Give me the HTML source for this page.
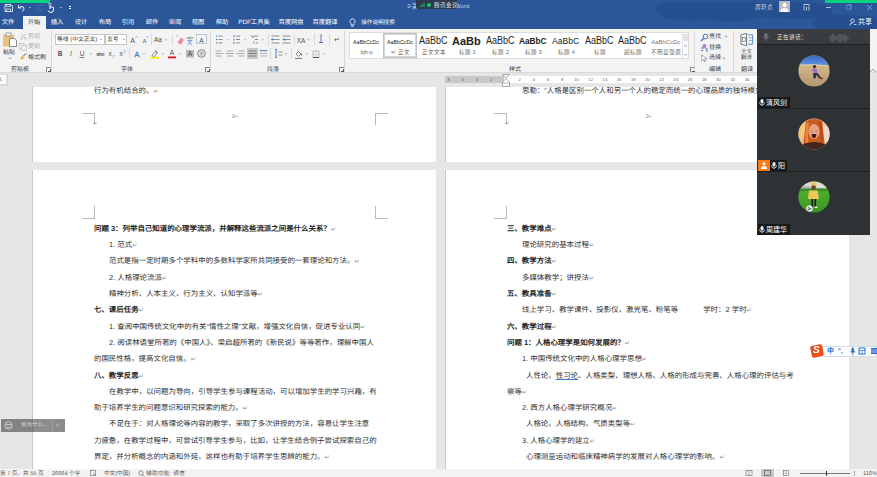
<!DOCTYPE html>
<html lang="zh-CN"><head><meta charset="utf-8">
<style>
*{margin:0;padding:0;box-sizing:border-box}
html,body{width:877px;height:477px;overflow:hidden;background:#e6e6e6;font-family:"Liberation Sans",sans-serif;position:relative}
.a{position:absolute}
#title{left:0;top:0;width:877px;height:29px;background:#2b579a;overflow:hidden}
#ribbon{left:0;top:29px;width:877px;height:44px;background:#f3f3f3;border-bottom:1px solid #dadada}
#status{left:0;top:469px;width:877px;height:8px;background:#f3f3f3}
.page{background:#fff;border-left:1px solid #c9c9c9}
.t{position:absolute;white-space:nowrap;font-size:7.45px;line-height:10px;color:#2e2e2e;text-rendering:geometricPrecision}
.b{font-weight:bold;color:#262626}
.pm{color:#8a8a8a;font-weight:normal;font-size:6px}
.rn{position:absolute;top:76px;width:10px;margin-left:-5px;text-align:center;font-size:4.2px;line-height:7px;color:#666}
.w{position:absolute;white-space:nowrap;color:#fff;font-size:7px;line-height:8px}
.tab{position:absolute;top:19px;white-space:nowrap;color:#fff;font-size:6.3px;line-height:8px;transform:translateX(-50%);text-rendering:geometricPrecision}
#panel{left:757px;top:29px;width:113px;height:206px;background:#2f3235}
.r{position:absolute;white-space:nowrap;font-size:6px;line-height:8px;color:#444;text-rendering:geometricPrecision}
.ic{font-size:7.5px;color:#555}
.sep{position:absolute;top:2px;width:1px;height:40px;background:#d6d6d6}
.vs{position:absolute;width:1px;background:#dadada}
.box{background:#fff;border:1px solid #c6c6c6}
.dd{position:absolute;width:0;height:0;border-left:1.5px solid transparent;border-right:1.5px solid transparent;border-top:1.5px solid #666}
.ch{position:absolute;width:3px;height:3px;border-right:.7px solid #888;border-bottom:.7px solid #888;transform:rotate(45deg)}
.ln{position:absolute;width:5px;height:5px;border-left:1px solid #888;border-top:1px solid #888;margin-top:1px}
.ln::after{content:"";position:absolute;left:1px;top:1px;width:2px;height:2px;border-right:1px solid #555;border-bottom:1px solid #555}
.st2{position:absolute;white-space:nowrap;color:#222;line-height:10px}
.sl2{position:absolute;white-space:nowrap;left:0;width:33px;text-align:center;top:16px;font-size:5.5px;line-height:7px;color:#666}
.st{position:absolute;white-space:nowrap;transform:translateX(-50%);color:#222;line-height:12px}
.sl{position:absolute;white-space:nowrap;transform:translateX(-50%);top:20px;font-size:6px;line-height:7px;color:#555}
</style></head><body>
<div id="title" class="a">
  <svg class="a" style="left:640px;top:0" width="237" height="29" viewBox="0 0 237 29"><g fill="#234d8b" opacity=".7"><path d="M18 4Q30 0 60 2Q100 0 130 3Q170 0 190 6Q196 14 186 18Q150 20 120 17Q100 24 70 20Q40 22 25 18Q12 12 18 4z"/><path d="M175 20Q195 12 215 16Q237 14 237 22V29H180Q170 26 175 20z"/></g></svg>
  <div class="a" style="left:0;top:0;width:50px;height:3px;background:#04d27c"></div>
  <div class="a" style="left:825px;top:0;width:52px;height:3px;background:#04d27c"></div>
  <!-- qat icons -->
  <svg class="a" style="left:4px;top:4px" width="9" height="8" viewBox="0 0 9 8"><path d="M1 .5h6l1.5 1.5v5.5h-7.5z" fill="none" stroke="#fff" stroke-width=".8"/><path d="M2.5 .5v2h4v-2 M2.5 7.5v-2.5h4v2.5" fill="none" stroke="#fff" stroke-width=".7"/></svg>
  <svg class="a" style="left:17px;top:4px" width="9" height="8" viewBox="0 0 9 8"><path d="M1.5 1v3h3" fill="none" stroke="#fff" stroke-width=".8"/><path d="M1.8 3.8Q4 1.5 6.5 3 Q8 5 5.5 7.5" fill="none" stroke="#fff" stroke-width=".9"/></svg>
  <div class="a" style="left:29px;top:7px;width:2px;height:1px;background:#8fa6c8"></div>
  <svg class="a" style="left:36px;top:4px" width="8" height="8" viewBox="0 0 8 8"><path d="M6 1.8A3 3 0 1 0 6.8 4.5" fill="none" stroke="#56739f" stroke-width=".9"/></svg>
  <svg class="a" style="left:47px;top:3px" width="8" height="10" viewBox="0 0 8 10"><path d="M3 1.5v4.5 M3 4h2.5a1 1 0 0 1 1 1v2Q6.5 9.5 4 9.5Q2 9.5 1.2 7.5" fill="none" stroke="#fff" stroke-width="1"/><path d="M1.5 1.5a1.5 1.5 0 0 1 3 0" fill="none" stroke="#fff" stroke-width=".6"/></svg>
  <div class="a" style="left:60px;top:7px;width:2px;height:1px;background:#8fa6c8"></div>
  <div class="a" style="left:69px;top:6px;width:2px;height:1px;background:#fff"></div>
  <div class="a" style="left:69px;top:8px;width:2px;height:1px;background:#fff"></div>
  <!-- title -->
  <div class="w" style="left:407px;top:2px;color:#c8d4e8;font-size:6px">3-第</div><div class="w" style="left:455px;top:2px;color:#c8d4e8;font-size:6px">Word</div>
  <div class="a" style="left:416px;top:0;width:41px;height:9px;background:#2e394c;border-radius:0 0 2px 2px"></div>
  <svg class="a" style="left:419px;top:2px" width="14" height="6" viewBox="0 0 14 6"><path d="M1 5v-1.5 M3 5v-3 M5 5v-4.5" stroke="#18c870" stroke-width="1"/><circle cx="10" cy="3" r="2" fill="#18c870"/></svg>
  <div class="w" style="left:434px;top:1px;font-size:5.5px;color:#e8e8e8">腾讯会议</div>
  <!-- right -->
  <div class="w" style="left:755px;top:3px;font-size:5.6px;color:#cfd8e6">周轩贞</div>
  <div class="a" style="left:779px;top:1px;width:11px;height:11px;background:#b9b9b9"></div>
  <svg class="a" style="left:779px;top:1px" width="11" height="11" viewBox="0 0 11 11"><circle cx="5.5" cy="4" r="2.2" fill="#fff"/><path d="M1.5 11 Q1.5 7 5.5 7 Q9.5 7 9.5 11z" fill="#fff"/></svg>
  <svg class="a" style="left:803px;top:4px" width="7" height="7" viewBox="0 0 7 7"><path d="M.5 .5h6 M1 1.5v5 M3.5 3v3.5 M6 1.5v5" fill="none" stroke="#dfe6f2" stroke-width=".8"/></svg>
  <div class="a" style="left:826px;top:7px;width:5px;height:1px;background:#aebfd8"></div>
  <svg class="a" style="left:845px;top:3px" width="8" height="8" viewBox="0 0 8 8"><path d="M1.5 2.5h4v4h-4z M2.5 2.5v-1h4v4h-1" fill="none" stroke="#8ea5c6" stroke-width=".5"/></svg>
  <svg class="a" style="left:866px;top:4px" width="7" height="7" viewBox="0 0 7 7"><path d="M1 1l5 5 M6 1l-5 5" stroke="#b8c7dc" stroke-width=".6"/></svg>
  <!-- tabs -->
  <div class="a" style="left:23px;top:16px;width:23px;height:13px;background:#f3f3f3"></div>
  <div class="tab" style="left:8px">文件</div>
  <div class="tab" style="left:34px;color:#3a3a3a">开始</div>
  <div class="tab" style="left:57px">插入</div>
  <div class="tab" style="left:81px">设计</div>
  <div class="tab" style="left:105px">布局</div>
  <div class="tab" style="left:128px">引用</div>
  <div class="tab" style="left:152px">邮件</div>
  <div class="tab" style="left:175px">审阅</div>
  <div class="tab" style="left:198px">视图</div>
  <div class="tab" style="left:222px">帮助</div>
  <div class="tab" style="left:254px">PDF工具集</div>
  <div class="tab" style="left:291px">百度网盘</div>
  <div class="tab" style="left:325px">百度翻译</div>
  <svg class="a" style="left:349px;top:18px" width="7" height="9" viewBox="0 0 7 9"><path d="M3.5 .8a2.6 2.6 0 0 0-1.5 4.7v1.5h3v-1.5a2.6 2.6 0 0 0-1.5-4.7z M2.3 8.3h2.4" fill="none" stroke="#fff" stroke-width=".8"/></svg>
  <div class="tab" style="left:378px;font-size:5.6px">操作说明搜索</div>
  <svg class="a" style="left:849px;top:18px" width="8" height="8" viewBox="0 0 8 8"><circle cx="3.5" cy="2.8" r="1.8" fill="none" stroke="#fff" stroke-width=".7"/><path d="M.8 7.5Q1 5 3.5 5 M5 6.5h2.5" fill="none" stroke="#fff" stroke-width=".7"/></svg>
  <div class="w" style="left:858px;top:18px">共享</div>
</div>

<div id="ribbon" class="a">
  <!-- clipboard group -->
  <svg class="a" style="left:2px;top:3px" width="15" height="15" viewBox="0 0 15 15"><rect x="1" y="2.5" width="11" height="12" fill="#eac37a"/><rect x="4" y="1" width="5" height="3" fill="#fff" stroke="#8a8a8a" stroke-width=".8"/><path d="M7.5 6.5h5l2 2v6h-7z" fill="#fff" stroke="#6f6f6f" stroke-width=".8"/></svg>
  <div class="r" style="left:3px;top:20px">粘贴</div>
  <svg class="a" style="left:8px;top:28px" width="4" height="3" viewBox="0 0 4 3"><path d="M.5 .5l1.5 1.5 1.5-1.5" fill="none" stroke="#777" stroke-width=".7"/></svg>
  <svg class="a" style="left:20px;top:4px" width="7" height="7" viewBox="0 0 7 7"><path d="M1 .5l4 4.5 M6 .5l-4 4.5" stroke="#b8b8b8" stroke-width=".8"/><circle cx="1.5" cy="5.5" r="1" fill="none" stroke="#b8b8b8" stroke-width=".7"/><circle cx="5.5" cy="5.5" r="1" fill="none" stroke="#b8b8b8" stroke-width=".7"/></svg>
  <div class="r" style="left:28px;top:4px;color:#a8a8a8">剪切</div>
  <svg class="a" style="left:19px;top:14px" width="8" height="8" viewBox="0 0 8 8"><rect x=".5" y=".5" width="4.5" height="5.5" fill="none" stroke="#b8b8b8" stroke-width=".7"/><rect x="3" y="2.5" width="4.5" height="5" fill="#f3f3f3" stroke="#b8b8b8" stroke-width=".7"/></svg>
  <div class="r" style="left:28px;top:14px;color:#a8a8a8">复制</div>
  <svg class="a" style="left:19px;top:24px" width="8" height="8" viewBox="0 0 8 8"><path d="M1 5l2.5-2.5 2 2L3 7z" fill="#e9b463"/><path d="M4.5 3l2.5-2.5" stroke="#444" stroke-width="1"/></svg>
  <div class="r" style="left:28px;top:25px">格式刷</div>
  <div class="r" style="left:11px;top:37px">剪贴板</div>
  <div class="ln" style="left:46px;top:37px"></div>
  <div class="sep" style="left:51px"></div>
  <!-- font group -->
  <div class="a box" style="left:55px;top:5px;width:50px;height:11px"></div>
  <div class="r" style="left:57px;top:7px;color:#333;font-size:5.8px">等线 (中文正文)</div>
  <div class="dd" style="left:100px;top:10px"></div>
  <div class="a box" style="left:105px;top:5px;width:22px;height:11px"></div>
  <div class="r" style="left:107px;top:7px;color:#333;font-size:5.8px">五号</div>
  <div class="dd" style="left:123px;top:10px"></div>
  <svg class="a" style="left:50px;top:0" width="160" height="34" viewBox="50 0 160 34">
    <g font-family="Liberation Sans" fill="#505050" text-anchor="middle">
      <text x="132.5" y="13.5" font-size="7">A</text><path d="M135.5 8.5l1-1 1 1" fill="none" stroke="#3b78c2" stroke-width=".7"/>
      <text x="144.5" y="13.5" font-size="5.5">A</text><path d="M146.5 7.5l1 1 1-1" fill="none" stroke="#3b78c2" stroke-width=".7"/>
      <text x="158" y="13" font-size="6.5">Aa</text>
      <text x="60" y="27" font-size="6.5" font-weight="bold">B</text>
      <text x="71" y="27" font-size="6.5" font-style="italic">I</text>
      <text x="82" y="27" font-size="6.5">U</text><path d="M79.5 28.5h5" stroke="#505050" stroke-width=".7"/>
      <text x="100.5" y="26.5" font-size="5">abc</text><path d="M96.5 25h8" stroke="#505050" stroke-width=".6"/>
      <text x="110" y="27" font-size="6.5">x</text><text x="113.5" y="29" font-size="3.5" fill="#3b78c2">2</text>
      <text x="121" y="27" font-size="6.5">x</text><text x="124.5" y="23.5" font-size="3.5" fill="#3b78c2">2</text>
      <text x="136.8" y="27.5" font-size="8" fill="#f3f3f3" stroke="#3b78c2" stroke-width=".5">A</text>
      <text x="172" y="26" font-size="6.5">A</text>
      <rect x="186" y="21" width="8" height="7.5" fill="#b8b8b8"/><text x="190" y="27" font-size="6.5" fill="#444">A</text>
      <text x="201.5" y="13.5" font-size="6.5">A</text>
    </g>
    <path d="M164.5 10l1.3 1.3 1.3-1.3 M89.5 24l1.3 1.3 1.3-1.3 M142.5 24l1.3 1.3 1.3-1.3 M161.5 24l1.3 1.3 1.3-1.3 M179 24l1.3 1.3 1.3-1.3" fill="none" stroke="#909090" stroke-width=".6"/>
    <path d="M151.5 5v11 M172.5 5v11 M129.5 19v11" stroke="#dadada" stroke-width="1"/>
    <path d="M177.5 13.5l3.5-5 3 2.2-3.5 5z" fill="#e88ba0"/><path d="M176.5 7.5l1.5-1.5" stroke="#666" stroke-width=".6"/>
    <text x="190" y="9.5" font-size="3.5" fill="#444" text-anchor="middle" font-family="Liberation Sans">wén</text>
    <text x="190" y="15" font-size="5.5" fill="#3b78c2" text-anchor="middle">文</text>
    <rect x="196.5" y="5.5" width="10" height="9" fill="none" stroke="#a9c0de" stroke-width=".8"/>
    <path d="M152 26.5l3.5-4 2 1.5-3.5 4z" fill="none" stroke="#555" stroke-width=".7"/><path d="M155 21.5l2.5 2" stroke="#555" stroke-width=".7"/>
    <rect x="150.5" y="27.8" width="8.5" height="1.8" fill="#f7ea00"/>
    <rect x="168" y="27.5" width="8" height="1.8" fill="#e8101a"/>
    <circle cx="201.5" cy="24.5" r="3.8" fill="none" stroke="#505050" stroke-width=".7"/><path d="M199.5 23h4 M199.5 24.5h4 M199.5 26h4" stroke="#505050" stroke-width=".5"/>
  </svg>
  <div class="r" style="left:121px;top:37px">字体</div>
  <div class="ln" style="left:205px;top:37px"></div>
  <div class="sep" style="left:210px"></div>
  <!-- paragraph group -->
  <svg class="a" style="left:210px;top:0" width="135" height="34" viewBox="210 0 135 34">
    <g fill="#3b78c2"><rect x="216" y="6.5" width="1.2" height="1.2"/><rect x="216" y="9.9" width="1.2" height="1.2"/><rect x="216" y="13.3" width="1.2" height="1.2"/></g>
    <path d="M218.5 7.1h4 M218.5 10.5h4 M218.5 13.9h4" stroke="#707070" stroke-width=".8"/>
    <g fill="#3b78c2"><rect x="233.5" y="6" width="1" height="2"/><rect x="233.5" y="9.5" width="1" height="2"/><rect x="233.5" y="13" width="1" height="2"/></g>
    <path d="M236 7.1h4 M236 10.5h4 M236 13.9h4" stroke="#707070" stroke-width=".8"/>
    <path d="M251 6.5l2.5 2.5" stroke="#3b78c2" stroke-width="1"/><path d="M253 7.1h5 M255 10.5h3 M256 13.9h2" stroke="#707070" stroke-width=".8"/><path d="M254 12l0 3" stroke="#3b78c2" stroke-width=".6"/>
    <path d="M226.3 10l1.3 1.3 1.3-1.3 M243.8 10l1.3 1.3 1.3-1.3 M261.3 10l1.3 1.3 1.3-1.3 M307 10l1.3 1.3 1.3-1.3" fill="none" stroke="#909090" stroke-width=".6"/>
    <path d="M268.5 5v12 M294.5 5v12 M314.5 5v12 M329.5 5v12" stroke="#dadada" stroke-width="1"/>
    <path d="M271.5 7h8 M274.5 10.5h5 M271.5 14h8" stroke="#777" stroke-width=".8"/><path d="M271.5 10.5h3 M272.5 9.3l-1 1.2 1 1.2" fill="none" stroke="#3b78c2" stroke-width=".9"/>
    <path d="M282.5 7h8 M285.5 10.5h5 M282.5 14h8" stroke="#777" stroke-width=".8"/><path d="M282.5 10.5h3 M284.5 9.3l1 1.2-1 1.2" fill="none" stroke="#3b78c2" stroke-width=".9"/>
    <text x="301" y="13.5" font-size="6.5" fill="#555" text-anchor="middle" font-family="Liberation Sans">XA</text>
    <path d="M321 6v8" stroke="#8a52b8" stroke-width=".9"/><path d="M319 13.5h4" stroke="#8a52b8" stroke-width="1"/><path d="M320 6.5l1-1 1 1" fill="none" stroke="#3b78c2" stroke-width=".6"/>
    <text x="336.5" y="13" font-size="7" fill="#555" text-anchor="middle" font-family="Liberation Sans">↵</text>
    <path d="M215.5 22h6 M215.5 24.5h8 M215.5 27h6" stroke="#8a8a8a" stroke-width=".7"/>
    <path d="M227 22h6 M226 24.5h8 M227 27h6" stroke="#8a8a8a" stroke-width=".7"/>
    <path d="M238.5 22h6 M236.5 24.5h8 M238.5 27h6" stroke="#8a8a8a" stroke-width=".7"/>
    <rect x="247" y="19" width="11" height="11" fill="#c8c8c8"/>
    <path d="M248.5 22h8 M248.5 24.5h8 M248.5 27h8" stroke="#666" stroke-width=".8"/>
    <path d="M260 22h7 M260 24.5h7 M260 27h7" stroke="#999" stroke-width=".7"/><path d="M260.5 21l-.5 .5 .5 .5 M266.5 21l.5 .5-.5 .5" fill="none" stroke="#3b78c2" stroke-width=".6"/><path d="M260 21.5h7" stroke="#3b78c2" stroke-width=".7"/>
    <path d="M270.5 19v11 M291.5 19v11" stroke="#dadada" stroke-width="1"/>
    <path d="M276 20v9" stroke="#3b78c2" stroke-width=".9"/><path d="M275 21l1-1 1 1 M275 28l1 1 1-1" fill="none" stroke="#3b78c2" stroke-width=".7"/>
    <path d="M278.5 23h4 M278.5 26h4" stroke="#777" stroke-width=".8"/>
    <path d="M284.5 24l1.3 1.3 1.3-1.3 M305.5 24l1.3 1.3 1.3-1.3 M323 24l1.3 1.3 1.3-1.3" fill="none" stroke="#909090" stroke-width=".6"/>
    <path d="M296 25l2.5-2.5 2.5 2.5-2.5 2.5z" fill="none" stroke="#555" stroke-width=".7"/><path d="M297.5 21.5l1-1" stroke="#555" stroke-width=".6"/><path d="M301.5 24.5v2" stroke="#3b78c2" stroke-width="1"/><path d="M295 29.5h7" stroke="#555" stroke-width=".8"/>
    <rect x="313" y="22" width="6" height="6.5" fill="none" stroke="#999" stroke-width=".6"/><path d="M313 25.2h6 M316 22v6.5" stroke="#bbb" stroke-width=".5"/><path d="M313 28.5h6" stroke="#444" stroke-width=".9"/>
  </svg>
  <div class="r" style="left:267px;top:37px">段落</div>
  <div class="ln" style="left:339px;top:37px"></div>
  <div class="sep" style="left:344px"></div>
  <!-- styles gallery -->
  <div class="a" style="left:349px;top:3px;width:340px;height:27px;background:#fff;border:1px solid #dcdcdc"></div>
  <div class="a" style="left:383px;top:4px;width:34px;height:25px;border:1px solid #c3c3c3;box-shadow:inset 0 0 0 1px #d8d8d8"></div>
  <div class="a" style="left:350px;top:4px;width:33px;height:25px;overflow:hidden"><div class="st2" style="font-size:5.3px;top:4px;left:3px">AaBbCcDc</div><div class="sl2">bjh-p</div></div>
  <div class="a" style="left:384px;top:4px;width:33px;height:25px;overflow:hidden"><div class="st2" style="font-size:5.3px;top:4px;left:3px">AaBbCcDc</div><div class="sl2">↵ 正文</div></div>
  <div class="a" style="left:417px;top:4px;width:33px;height:25px;overflow:hidden"><div class="st2" style="font-size:10px;top:3px;left:2px;transform:scaleX(.9);transform-origin:0 0">AaBbC</div><div class="sl2">正文文本</div></div>
  <div class="a" style="left:451px;top:4px;width:33px;height:25px;overflow:hidden"><div class="st2" style="font-size:11px;top:2.5px;left:1px;font-weight:bold">AaBb</div><div class="sl2">标题 1</div></div>
  <div class="a" style="left:484px;top:4px;width:33px;height:25px;overflow:hidden"><div class="st2" style="font-size:10px;top:3px;left:2px;transform:scaleX(.9);transform-origin:0 0">AaBbC</div><div class="sl2">标题 2</div></div>
  <div class="a" style="left:517px;top:4px;width:33px;height:25px;overflow:hidden"><div class="st2" style="font-size:9px;top:3px;left:2px;font-weight:bold;transform:scaleX(.92);transform-origin:0 0">AaBbC</div><div class="sl2">标题 3</div></div>
  <div class="a" style="left:550px;top:4px;width:33px;height:25px;overflow:hidden"><div class="st2" style="font-size:9.5px;top:3px;left:2px;transform:scaleX(.9);transform-origin:0 0">AaBbC</div><div class="sl2">标题 4</div></div>
  <div class="a" style="left:583px;top:4px;width:33px;height:25px;overflow:hidden"><div class="st2" style="font-size:10px;top:3px;left:2px;transform:scaleX(.9);transform-origin:0 0">AaBbC</div><div class="sl2">标题</div></div>
  <div class="a" style="left:616px;top:4px;width:33px;height:25px;overflow:hidden"><div class="st2" style="font-size:10px;top:3px;left:2px;transform:scaleX(.9);transform-origin:0 0">AaBbC</div><div class="sl2">副标题</div></div>
  <div class="a" style="left:649px;top:4px;width:33px;height:25px;overflow:hidden"><div class="st2" style="font-size:6px;top:4px;left:2px;font-style:italic;color:#777">AaBbCcDc</div><div class="sl2">不明显强调</div></div>
  <div class="a" style="left:682px;top:4px;width:6px;height:25px;border-left:1px solid #e2e2e2"></div>
  <div class="a" style="left:683px;top:5px;width:5px;height:7px;background:#e4e4e4"></div>
  <svg class="a" style="left:683px;top:14px" width="5" height="15" viewBox="0 0 5 15"><path d="M1 2l1.5 1.5 1.5-1.5 M1 11l1.5 1.5 1.5-1.5" fill="none" stroke="#666" stroke-width=".6"/></svg>
  <div class="r" style="left:509px;top:37px">样式</div>
  <div class="ln" style="left:690px;top:37px"></div>
  <div class="sep" style="left:694px"></div>
  <!-- editing -->
  <svg class="a" style="left:700px;top:4px" width="9" height="9" viewBox="0 0 9 9"><circle cx="5.5" cy="3.5" r="2.3" fill="none" stroke="#3b78c2" stroke-width="1"/><path d="M4 5l-3 3" stroke="#3b78c2" stroke-width="1.2"/></svg>
  <div class="r" style="left:709px;top:4px">查找</div>
  <div class="ch" style="left:725px;top:6px;width:2px;height:2px;border-color:#aaa"></div>
  <svg class="a" style="left:700px;top:14px" width="9" height="9" viewBox="0 0 9 9"><path d="M1 5h3 M1 7.5h2" stroke="#3b78c2" stroke-width="1"/><circle cx="4.5" cy="3" r="2" fill="#b07ad0"/><path d="M5 6h3 M6 8h2" stroke="#3b78c2" stroke-width="1"/></svg>
  <div class="r" style="left:709px;top:15px">替换</div>
  <svg class="a" style="left:700px;top:25px" width="8" height="8" viewBox="0 0 9 9"><path d="M2 1v7l2-2 1.5 3 1-.5-1.5-3h3z" fill="#fff" stroke="#777" stroke-width=".7"/></svg>
  <div class="r" style="left:709px;top:25px">选择</div>
  <div class="ch" style="left:723px;top:28px;width:2px;height:2px;border-color:#aaa"></div>
  <div class="r" style="left:709px;top:37px">编辑</div>
  <div class="sep" style="left:733px"></div>
  <svg class="a" style="left:740px;top:4px" width="14" height="13" viewBox="0 0 15 14"><path d="M1 2l6-1.5v13L1 12z" fill="#fff" stroke="#444" stroke-width=".8"/><rect x="2.5" y="5" width="3" height="4" fill="none" stroke="#444" stroke-width=".6"/><path d="M8.5 2h5v10h-5" fill="none" stroke="#3b78c2" stroke-width=".9"/><path d="M9.5 5h3 M9.5 8h3" stroke="#3b78c2" stroke-width=".7"/></svg>
  <div class="r" style="left:741px;top:19.5px;font-size:5.4px;line-height:6px">全文</div>
  <div class="r" style="left:741px;top:26px;font-size:5.4px;line-height:6px">翻译</div>
  <div class="r" style="left:741px;top:37px">翻译</div>
</div>


<!-- ruler -->
<div class="a" style="left:0;top:74px;width:8px;height:12px;background:#d9d9d9"></div>
<div class="a" style="left:0;top:75px;width:6px;height:9px;background:#fff"></div>
<div class="r" style="left:0;top:76px;font-size:5px;color:#444">L</div>
<div class="a" style="left:445px;top:76px;width:312px;height:7px;background:#fff"></div>
<div class="a" style="left:445px;top:76px;width:59px;height:7px;background:#c8c8c8"></div>

<div class="rn" style="left:491.2px">2</div><div class="rn" style="left:477.0px">4</div><div class="rn" style="left:462.8px">6</div><div class="rn" style="left:448.6px">8</div><div class="rn" style="left:519.6px">2</div><div class="rn" style="left:533.8px">4</div><div class="rn" style="left:548.0px">6</div><div class="rn" style="left:562.2px">8</div><div class="rn" style="left:576.5px">10</div><div class="rn" style="left:590.7px">12</div><div class="rn" style="left:604.9px">14</div><div class="rn" style="left:619.1px">16</div><div class="rn" style="left:633.3px">18</div><div class="rn" style="left:647.5px">20</div><div class="rn" style="left:661.7px">22</div><div class="rn" style="left:675.9px">24</div><div class="rn" style="left:690.1px">26</div><div class="rn" style="left:704.3px">28</div><div class="rn" style="left:718.5px">30</div><div class="rn" style="left:732.8px">32</div><div class="rn" style="left:747.0px">34</div>
<svg class="a" style="left:502px;top:74px" width="8" height="13" viewBox="0 0 8 13"><path d="M.5 .5h7L4 4z" fill="#fff" stroke="#888" stroke-width=".7"/><path d="M4 4.5L.5 8v4.5h7V8z" fill="#fff" stroke="#888" stroke-width=".7"/><path d="M.5 9h7" stroke="#888" stroke-width=".6"/></svg>
<!-- pages -->
<div class="a page" style="left:32px;top:87px;width:404px;height:75px"></div>
<div class="a page" style="left:445px;top:87px;width:404px;height:75px"></div>
<div class="a page" style="left:32px;top:170px;width:404px;height:300px"></div>
<div class="a page" style="left:445px;top:170px;width:404px;height:300px"></div>
<!-- crop marks -->
<div class="a cm" style="left:82px;top:113px;width:13px;height:11px;border-top:1px solid #bababa;border-right:1px solid #bababa"></div>
<div class="a cm" style="left:375px;top:113px;width:13px;height:12px;border-top:1px solid #bababa;border-left:1px solid #bababa"></div>
<div class="a cm" style="left:82px;top:206px;width:13px;height:13px;border-bottom:1px solid #bababa;border-right:1px solid #bababa"></div>
<div class="a cm" style="left:375px;top:206px;width:13px;height:13px;border-bottom:1px solid #bababa;border-left:1px solid #bababa"></div>
<div class="a cm" style="left:494px;top:113px;width:13px;height:11px;border-top:1px solid #bababa;border-right:1px solid #bababa"></div>
<div class="a cm" style="left:494px;top:206px;width:13px;height:13px;border-bottom:1px solid #bababa;border-right:1px solid #bababa"></div>
<div class="t" style="left:232px;top:112px;font-size:5px;color:#444">2<span class="pm" style="font-size:4px">↵</span></div><div class="t" style="left:93px;top:119px;font-size:5px"><span class="pm" style="font-size:5px">↵</span></div><div class="t" style="left:505px;top:119px;font-size:5px"><span class="pm" style="font-size:5px">↵</span></div>
<div class="t" style="left:646px;top:112px;font-size:5px;color:#444">2<span class="pm" style="font-size:4px">↵</span></div>
<!-- left page text -->
<div class="a" style="left:33px;top:87px;width:300px;height:20px;overflow:hidden"><div class="t" style="left:61px;top:-1px">行为有机结合的。<span class="pm">↵</span></div></div>
<div class="t b" style="left:94px;top:223.90px">问题 3：列举自己知道的心理学流派，并解释这些流派之间是什么关系？<span class="pm">↵</span></div>
<div class="t" style="left:109px;top:240.19px">1. 范式<span class="pm">↵</span></div>
<div class="t" style="left:109px;top:256.48px">范式是指一定时期多个学科中的多数科学家所共同接受的一套理论和方法。<span class="pm">↵</span></div>
<div class="t" style="left:109px;top:272.77px">2. 人格理论流派<span class="pm">↵</span></div>
<div class="t" style="left:109px;top:289.06px">精神分析、人本主义、行为主义、认知学派等<span class="pm">↵</span></div>
<div class="t b" style="left:94px;top:305.35px">七、课后任务<span class="pm">↵</span></div>
<div class="t" style="left:109px;top:321.64px">1. 查阅中国传统文化中的有关“情性之理”文献，增强文化自信，促进专业认同<span class="pm">↵</span></div>
<div class="t" style="left:109px;top:337.93px">2. 阅读林语堂所著的《中国人》、梁启超所著的《新民说》等等著作，理解中国人</div>
<div class="t" style="left:94px;top:354.22px">的国民性格，提高文化自信。<span class="pm">↵</span></div>
<div class="t b" style="left:94px;top:370.51px">八、教学反思<span class="pm">↵</span></div>
<div class="t" style="left:109px;top:386.80px">在教学中，以问题为导向，引导学生参与课程活动，可以增加学生的学习兴趣，有</div>
<div class="t" style="left:94px;top:403.09px">助于培养学生的问题意识和研究探索的能力。<span class="pm">↵</span></div>
<div class="t" style="left:109px;top:419.38px">不足在于：对人格理论等内容的教学，采取了多次讲授的方法，容易让学生注意</div>
<div class="t" style="left:94px;top:435.67px">力疲惫，在教学过程中，可尝试引导学生参与，比如，让学生结合例子尝试探索自己的</div>
<div class="t" style="left:94px;top:451.96px">界定，并分析概念的内涵和外延，这样也有助于培养学生思辨的能力。<span class="pm">↵</span></div>

<div class="a" style="left:446px;top:87px;width:311px;height:20px;overflow:hidden"><div class="t" style="left:76px;top:-0.7px">思勒：“人格是区别一个人和另一个人的稳定而统一的心理品质的独特模式”</div></div>
<div class="t b" style="left:507px;top:223.90px">三、教学难点<span class="pm">↵</span></div>
<div class="t" style="left:522px;top:240.19px">理论研究的基本过程<span class="pm">↵</span></div>
<div class="t b" style="left:507px;top:256.48px">四、教学方法<span class="pm">↵</span></div>
<div class="t" style="left:522px;top:272.77px">多媒体教学；讲授法<span class="pm">↵</span></div>
<div class="t b" style="left:507px;top:289.06px">五、教具准备<span class="pm">↵</span></div>
<div class="t" style="left:522px;top:305.35px">线上学习、教学课件、投影仪、激光笔、粉笔等<span style="display:inline-block;width:25px"></span>学时：2 学时<span class="pm">↵</span></div>
<div class="t b" style="left:507px;top:321.64px">六、教学过程<span class="pm">↵</span></div>
<div class="t b" style="left:507px;top:337.93px">问题 1：人格心理学是如何发展的？<span class="pm">↵</span></div>
<div class="t" style="left:522px;top:354.22px">1. 中国传统文化中的人格心理学思想<span class="pm">↵</span></div>
<div class="t" style="left:526px;top:370.51px">人性论、<u style="text-decoration-color:#3b78c2">性习论</u>、人格类型、理想人格、人格的形成与完善、人格心理的评估与考</div>
<div class="t" style="left:507px;top:386.80px">察等<span class="pm">↵</span></div>
<div class="t" style="left:522px;top:403.09px">2. 西方人格心理学研究概况<span class="pm">↵</span></div>
<div class="t" style="left:526px;top:419.38px">人格论、人格结构、气质类型等<span class="pm">↵</span></div>
<div class="t" style="left:522px;top:435.67px">3. 人格心理学的建立<span class="pm">↵</span></div>
<div class="t" style="left:526px;top:451.96px">心理测量运动和临床精神病学的发展对人格心理学的影响。<span class="pm">↵</span></div>

<!-- status bar -->
<div id="status" class="a">
  <div class="r" style="left:0;top:1px;font-size:5.6px;line-height:8px;color:#555">第 7 页，共 55 页</div>
  <div class="r" style="left:52px;top:1px;font-size:5.6px;line-height:8px;color:#555">26064 个字</div>
  <svg class="a" style="left:90px;top:1px" width="7" height="7" viewBox="0 0 7 7"><rect x=".5" y=".5" width="5" height="5" fill="none" stroke="#777" stroke-width=".7"/><path d="M3 3l3 3" stroke="#777" stroke-width=".7"/></svg>
  <div class="r" style="left:104px;top:1px;font-size:5.6px;line-height:8px;color:#555">中文(中国)</div>
  <svg class="a" style="left:138px;top:1px" width="7" height="7" viewBox="0 0 7 7"><circle cx="3" cy="3" r="2.2" fill="none" stroke="#666" stroke-width=".7"/><path d="M4.5 4.5l2 2" stroke="#666" stroke-width=".8"/></svg>
  <div class="r" style="left:146px;top:1px;font-size:5.6px;line-height:8px;color:#555;letter-spacing:.3px">辅助功能: 调查</div>
  <svg class="a" style="left:745px;top:0" width="48" height="8" viewBox="0 0 48 8"><rect x="1" y="1.5" width="6" height="5" fill="none" stroke="#777" stroke-width=".7"/><path d="M4 1.5v5" stroke="#777" stroke-width=".6"/><rect x="16" y="0" width="13" height="8" fill="#c9c9c9"/><rect x="19.5" y="1.5" width="6" height="5" fill="none" stroke="#555" stroke-width=".7"/><rect x="38.5" y="1.5" width="5" height="5" fill="none" stroke="#777" stroke-width=".7"/><path d="M40 3h2 M40 4.5h2" stroke="#777" stroke-width=".6"/></svg>
  <div class="a" style="left:800px;top:4px;width:50px;height:1px;background:#777"></div>
  <div class="a" style="left:826px;top:2px;width:1px;height:5px;background:#333"></div>
  <div class="a" style="left:854px;top:2px;width:1px;height:5px;background:#aaa"></div>
  <div class="r" style="left:863px;top:1px;font-size:5.6px;line-height:8px;color:#555">110%</div>
</div>
<!-- scrollbar -->
<div class="a" style="left:870px;top:74px;width:7px;height:395px;background:#e6e6e6"></div>
<svg class="a" style="left:869px;top:68px" width="8" height="5" viewBox="0 0 8 5"><path d="M1 4l3-3 3 3" fill="none" stroke="#777" stroke-width=".7"/></svg>
<!-- floating widget -->
<div class="a" style="left:1px;top:419px;width:64px;height:13px;background:rgba(70,70,70,.62)"></div>
<svg class="a" style="left:4px;top:421px" width="9" height="9" viewBox="0 0 9 9"><circle cx="4.5" cy="4.5" r="3.7" fill="none" stroke="#ddd" stroke-width=".8"/><path d="M1.5 3.5h6 M2.5 5.5Q4.5 7.5 6.5 5.5" fill="none" stroke="#ddd" stroke-width=".8"/></svg>
<div class="r" style="left:21px;top:421px;font-size:5.5px;color:#ddd">说点什么...</div>
<div class="a" style="left:52px;top:420px;width:1px;height:11px;background:rgba(255,255,255,.15)"></div>
<div class="r" style="left:56px;top:422px;font-size:6px;color:#ddd">&lt;</div>
<!-- sogou -->
<div class="a" style="left:822px;top:346px;width:55px;height:11px;background:#fff;border:1px solid #cfdcec"></div>
<div class="a" style="left:811px;top:345px;width:12px;height:12px;background:#ee4d1a;border-radius:2px;transform:rotate(-12deg)"></div>
<div class="r" style="left:813px;top:345px;font-size:10px;line-height:12px;color:#fff;font-weight:bold;font-style:italic">S</div>
<div class="r" style="left:827px;top:347px;font-size:7px;line-height:9px;color:#1d6fd6;font-weight:bold">中</div>
<div class="r" style="left:838px;top:347px;font-size:7px;line-height:9px;color:#1d6fd6;font-weight:bold">°,</div>
<svg class="a" style="left:850px;top:347px" width="30" height="9" viewBox="0 0 30 9"><rect x="1.5" y="0.5" width="2.5" height="5" rx="1.2" fill="#1d6fd6"/><path d="M.8 4a2 2 0 0 0 4 0 M2.8 6.5v2" fill="none" stroke="#1d6fd6" stroke-width=".8"/><rect x="9" y="1" width="6" height="6" fill="none" stroke="#1d6fd6" stroke-width="1"/><path d="M9 3.5h6 M12 3.5v3.5" stroke="#1d6fd6" stroke-width=".7"/><rect x="21" y="1" width="6" height="6" fill="#1d6fd6"/><path d="M21 3h6 M21 5h6" stroke="#fff" stroke-width=".6"/></svg>

<div id="panel" class="a">
  <div class="a" style="left:0;top:0;width:113px;height:16px;background:#393c40;border-bottom:1px solid #1d1f21"></div>
  <svg class="a" style="left:6px;top:4px" width="6" height="8" viewBox="0 0 6 8"><rect x="1.5" y="0" width="3" height="5" rx="1.5" fill="#777"/><path d="M.5 3.5a2.5 2.5 0 0 0 5 0 M3 6v2" fill="none" stroke="#777" stroke-width=".8"/></svg>
  <div class="w" style="left:20px;top:4px;font-size:5.6px;color:#e6e6e6">正在讲话：</div>
  <svg class="a" style="left:71px;top:3px" width="22" height="11" viewBox="0 0 22 11"><path d="M5 1L10 6 5 11 0 6z M12 1L17 6 12 11 7 6z M16 1L21.5 6 17 11 12 6z" fill="#505458"/></svg>
  <div class="a" style="left:0;top:79px;width:113px;height:1px;background:#1d1f21"></div>
  <div class="a" style="left:0;top:142px;width:113px;height:1px;background:#1d1f21"></div>
  <svg class="a" style="left:41px;top:26px" width="32" height="32" viewBox="0 0 32 32">
    <defs><clipPath id="c1"><circle cx="16" cy="16" r="15.6"/></clipPath>
    <linearGradient id="g1" x1="0" y1="0" x2="0" y2="1"><stop offset="0" stop-color="#3566c0"/><stop offset="1" stop-color="#5d93dc"/></linearGradient>
    <linearGradient id="g1b" x1="0" y1="0" x2="0" y2="1"><stop offset="0" stop-color="#dcc49a"/><stop offset=".5" stop-color="#ccb083"/><stop offset="1" stop-color="#b39671"/></linearGradient></defs>
    <g clip-path="url(#c1)">
      <rect width="32" height="32" fill="url(#g1b)"/>
      <rect width="32" height="10" fill="url(#g1)"/>
      <path d="M0 10Q16 9 32 11" fill="none" stroke="#e4d2ae" stroke-width="1"/>
      <path d="M2 20q6-2 10 0 M4 25q8-2 14 1 M20 26q5-1 10 1" fill="none" stroke="#a88c66" stroke-width=".6" opacity=".6"/>
      <circle cx="16.5" cy="11.5" r="1.5" fill="#2a2520"/>
      <path d="M14.5 13.5h4l1 4.5h-5.5z" fill="#9c6fb8"/>
      <path d="M14 16.5h2v1.5h-2z" fill="#e0a0b8"/>
      <path d="M15 18h4.5l3 4-1.5 1-2.5-3-1 3.5h-2z" fill="#2a3550"/>
      <path d="M21 21.5l4 1.5-.5 1.5-4-1z" fill="#3a3028" opacity=".8"/>
    </g>
  </svg>
  <svg class="a" style="left:41px;top:89px" width="32" height="32" viewBox="0 0 32 32">
    <defs><clipPath id="c2"><circle cx="16" cy="16" r="15.6"/></clipPath>
    <radialGradient id="g2" cx=".5" cy=".45" r=".6"><stop offset="0" stop-color="#f6d8b8"/><stop offset="1" stop-color="#e8b48c"/></radialGradient></defs>
    <g clip-path="url(#c2)">
      <rect width="32" height="32" fill="url(#g2)"/>
      <rect x="0" y="6" width="7" height="14" fill="#f8c870" opacity=".8"/>
      <rect x="25" y="8" width="7" height="16" fill="#f2d8cc"/>
      <path d="M8 3Q16 -1 24 3l3 26H5z" fill="#c85a20"/>
      <path d="M9 4Q6 16 8 28h3Q9 15 11 5z" fill="#e88a3a"/>
      <path d="M23 4Q26 16 24 28h-2Q24 15 21 5z" fill="#b04a18"/>
      <ellipse cx="16" cy="13.5" rx="5.5" ry="7.5" fill="#eaa084"/>
      <ellipse cx="13.5" cy="13" rx="1.5" ry="1" fill="#f07060" opacity=".6"/>
      <ellipse cx="18.5" cy="13" rx="1.5" ry="1" fill="#f07060" opacity=".6"/>
      <ellipse cx="16" cy="17" rx="2.3" ry="3" fill="#4a1812"/>
      <rect x="14" y="14.5" width="4" height="1.2" fill="#fff"/>
      <path d="M3 27Q16 21 29 27v5H3z" fill="#40261c"/>
    </g>
  </svg>
  <svg class="a" style="left:41px;top:152px" width="32" height="32" viewBox="0 0 32 32">
    <defs><clipPath id="c3"><circle cx="16" cy="16" r="15.6"/></clipPath>
    <linearGradient id="g3" x1="0" y1="0" x2="0" y2="1"><stop offset="0" stop-color="#56b832"/><stop offset="1" stop-color="#3c9422"/></linearGradient></defs>
    <g clip-path="url(#c3)">
      <rect width="32" height="32" fill="url(#g3)"/>
      <rect width="32" height="7.5" fill="#dcdcd6"/>
      <rect x="2" y="5" width="10" height="3" fill="#b8b8b0"/>
      <rect y="7.5" width="32" height="2.5" fill="#3e8a2a"/>
      <rect x="13" y="1.5" width="5.5" height="3" fill="#e8c84a"/>
      <ellipse cx="15.5" cy="6.5" rx="2.5" ry="2.3" fill="#6a4a32"/>
      <path d="M11 9.5h8.5l1.5 8.5h-11z" fill="#ebca5a"/>
      <rect x="13.5" y="18" width="1.6" height="8" fill="#161616"/>
      <rect x="16.5" y="18" width="1.6" height="8" fill="#161616"/>
      <rect x="16.5" y="25.5" width="3" height="1.5" fill="#eee"/>
      <circle cx="11.5" cy="27.5" r="3.3" fill="#e6e6e6"/>
      <path d="M10 26.5l2 1 M11.5 29l1.5-2 M9.5 28.5h1.5" stroke="#333" stroke-width=".8"/>
    </g>
  </svg>
  <div class="a" style="left:1px;top:68px;width:32px;height:11px;background:#17191b"></div>
  <svg class="a" style="left:2px;top:70px" width="6" height="7" viewBox="0 0 6 7"><rect x="1.5" y="0" width="3" height="4.5" rx="1.5" fill="#eee"/><path d="M.5 3.5a2.5 2.5 0 0 0 5 0 M3 6v1" fill="none" stroke="#eee" stroke-width=".8"/></svg>
  <div class="w" style="left:9px;top:70px;font-size:7px;line-height:8px">清风剑</div>
  <div class="a" style="left:1px;top:131px;width:12px;height:11px;background:#f57c1a"></div>
  <svg class="a" style="left:3px;top:133px" width="8" height="7" viewBox="0 0 8 7"><circle cx="4" cy="1.8" r="1.5" fill="#fff"/><path d="M1 7Q1 4 4 4Q7 4 7 7z" fill="#fff"/></svg>
  <div class="a" style="left:13px;top:131px;width:17px;height:11px;background:#17191b"></div>
  <svg class="a" style="left:14px;top:133px" width="6" height="7" viewBox="0 0 6 7"><rect x="1.5" y="0" width="3" height="4.5" rx="1.5" fill="#eee"/><path d="M.5 3.5a2.5 2.5 0 0 0 5 0 M3 6v1" fill="none" stroke="#eee" stroke-width=".8"/></svg>
  <div class="w" style="left:21px;top:133px;font-size:7px;line-height:8px">阳</div>
  <div class="a" style="left:1px;top:195px;width:32px;height:11px;background:#17191b"></div>
  <svg class="a" style="left:2px;top:197px" width="6" height="7" viewBox="0 0 6 7"><rect x="1.5" y="0" width="3" height="4.5" rx="1.5" fill="#eee"/><path d="M.5 3.5a2.5 2.5 0 0 0 5 0 M3 6v1" fill="none" stroke="#eee" stroke-width=".8"/></svg>
  <div class="w" style="left:9px;top:197px;font-size:7px;line-height:8px">周建华</div>
</div>
</body></html>
